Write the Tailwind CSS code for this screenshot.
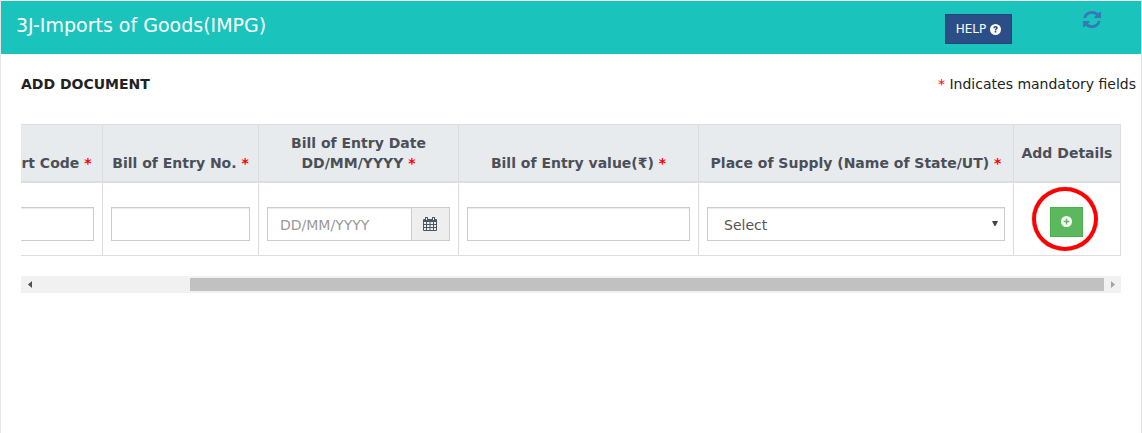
<!DOCTYPE html>
<html lang="en">
<head>
<meta charset="utf-8">
<meta name="viewport" content="width=device-width, initial-scale=1">
<title>3J-Imports of Goods(IMPG)</title>
<script src="https://cdn.jsdelivr.net/npm/@tailwindcss/browser@4"></script>
</head>
<body class="bg-white">
<main class="flex min-h-screen flex-col border-x border-[#e4e7ea] bg-white pt-px font-[Verdana,'DejaVu_Sans',sans-serif] text-sm leading-5 text-[#222]">
  <header class="flex h-[53px] items-start bg-[#1ac4bd] pr-10 pl-[15px] text-white">
    <h1 class="mt-3 flex-1 text-[19px] leading-6">3J-Imports of Goods(IMPG)</h1>
    <button type="button" class="mt-[13px] mr-[71px] flex h-[30px] w-[67px] items-center justify-center gap-1 border border-[#24447a] bg-[#2c4e86] text-xs">
      HELP
      <svg class="size-[11px]" viewBox="0 0 12 12" aria-hidden="true"><circle cx="6" cy="6" r="6" fill="#fff"/><path d="M3.600 4.500C3.800 3 4.800 2.300 6.100 2.300c1.300 0 2.400.8 2.400 2 0 1.600-1.700 1.600-1.700 2.700H5.100c0-1.900 1.600-1.900 1.600-2.700 0-.8-1.300-.8-1.500.4zM5.100 7.700h1.700v1.700H5.100z" fill="#2c4e86"/></svg>
    </button>
    <button type="button" aria-label="Refresh" class="mt-2.5 w-[18px]">
      <svg class="h-[17px] w-[18px]" viewBox="0 0 1536 1536" fill="#337ab7" preserveAspectRatio="none" aria-hidden="true"><path d="M1511 928q0 5-1 7-64 268-268 434.500T764 1536q-146 0-282.500-55T238 1324l-129 129q-19 19-45 19t-45-19-19-45V960q0-26 19-45t45-19h448q26 0 45 19t19 45-19 45l-137 137q71 66 161 102t187 36q134 0 250-65t186-179q11-17 53-117 8-23 30-23h192q13 0 22.500 9.500t9.500 22.500zM1536 128v448q0 26-19 45t-45 19h-448q-26 0-45-19t-19-45 19-45l138-138Q969 256 768 256q-134 0-250 65T332 500q-11 17-53 117-8 23-30 23H50q-13 0-22.500-9.500T18 608v-7q65-268 270-434.500T768 0q146 0 284 55.500T1297 212l130-129q19-19 45-19t45 19 19 45z"/></svg>
    </button>
  </header>

  <section class="flex items-center justify-between pt-5 pr-[5px] pl-5">
    <h2 class="font-bold">ADD DOCUMENT</h2>
    <p><span class="text-[#f00]">*</span> Indicates mandatory fields</p>
  </section>

  <section class="mx-5 mt-[30px]">
    <div class="flex justify-end overflow-hidden">
      <table class="w-[calc(100%+31px)] shrink-0 table-fixed border-collapse border border-[#ddd]">
        <colgroup>
          <col class="w-[112px]"><col class="w-[156px]"><col class="w-[200px]"><col><col class="w-[315px]"><col class="w-[107px]">
        </colgroup>
        <thead class="bg-[#e8ebee] text-[#4b4f58]">
          <tr class="h-[57px] border-b-2 border-[#ddd] align-bottom">
            <th scope="col" id="port" class="border-x border-[#ddd] pb-2 whitespace-nowrap">Port Code <span class="text-[#f00]">*</span></th>
            <th scope="col" id="entry" class="border-x border-[#ddd] pb-2 whitespace-nowrap">Bill of Entry No. <span class="text-[#f00]">*</span></th>
            <th scope="col" id="date" class="border-x border-[#ddd] pb-2">Bill of Entry Date<br>DD/MM/YYYY <span class="text-[#f00]">*</span></th>
            <th scope="col" id="value" class="border-x border-[#ddd] pb-2">Bill of Entry value(₹) <span class="text-[#f00]">*</span></th>
            <th scope="col" id="place" class="border-x border-[#ddd] pb-2 whitespace-nowrap">Place of Supply (Name of State/UT) <span class="text-[#f00]">*</span></th>
            <th scope="col" class="border-x border-[#ddd] align-middle whitespace-nowrap">Add Details</th>
          </tr>
        </thead>
        <tbody>
          <tr class="h-[74px] align-top text-[#555]">
            <td class="border border-[#ddd] px-2 pt-6"><input aria-labelledby="port" type="text" class="block h-[34px] w-full border border-[#ccc] px-3 shadow-[inset_0_1px_1px_rgba(0,0,0,0.075)]"></td>
            <td class="border border-[#ddd] px-2 pt-6"><input aria-labelledby="entry" type="text" class="block h-[34px] w-full border border-[#ccc] px-3 shadow-[inset_0_1px_1px_rgba(0,0,0,0.075)]"></td>
            <td class="border border-[#ddd] px-2 pt-6">
              <div class="flex h-[34px]">
                <input aria-labelledby="date" type="text" placeholder="DD/MM/YYYY" class="min-w-0 flex-1 border border-[#ccc] px-3 pt-0.5 shadow-[inset_0_1px_1px_rgba(0,0,0,0.075)] placeholder:text-[#999]">
                <button type="button" aria-label="Choose date" class="flex w-[38px] items-center justify-center border border-l-0 border-[#ccc] bg-[#eee] pr-0.5">
                  <svg class="h-3.5 w-3.5" viewBox="0 0 14 14" fill="#4d5761" aria-hidden="true"><path fill-rule="evenodd" d="M1 2h1V1a1 1 0 0 1 3 0v1h4V1a1 1 0 0 1 3 0v1h1a1 1 0 0 1 1 1v10a1 1 0 0 1-1 1H1a1 1 0 0 1-1-1V3a1 1 0 0 1 1-1zM3 1v2h1V1zM10 1v2h1V1zM1 5v2h2V5zM4 5v2h2.500V5zM7.500 5v2H10V5zM11 5v2h2V5zM1 8v2h2V8zM4 8v2h2.500V8zM7.500 8v2H10V8zM11 8v2h2V8zM1 11v2h2v-2zM4 11v2h2.500v-2zM7.500 11v2H10v-2zM11 11v2h2v-2z"/></svg>
                </button>
              </div>
            </td>
            <td class="border border-[#ddd] px-2 pt-6"><input aria-labelledby="value" type="text" class="block h-[34px] w-full border border-[#ccc] px-3 shadow-[inset_0_1px_1px_rgba(0,0,0,0.075)]"></td>
            <td class="border border-[#ddd] px-2 pt-6">
              <div class="relative">
                <select aria-labelledby="place" class="block h-[34px] w-full appearance-none border border-[#ccc] px-4 pt-0.5 shadow-[inset_0_1px_1px_rgba(0,0,0,0.075)]"><option>Select</option></select>
                <svg class="pointer-events-none absolute top-3.5 right-[7px] h-[5px] w-1.5" viewBox="0 0 6 5" fill="#444" aria-hidden="true"><path d="M0 0h6L3.500 5h-1z"/></svg>
              </div>
            </td>
            <td class="border border-[#ddd] pt-6 pr-[2px]">
              <div class="relative mx-auto w-[33px]">
                <button type="button" aria-label="Add details" class="flex h-[30px] w-full items-center justify-center border border-[#4cae4c] bg-[#5cb85c]">
                  <svg class="size-[11px]" viewBox="0 0 12 12" aria-hidden="true"><circle cx="6" cy="6" r="6" fill="#fff"/><path d="M5.200 2.800h1.600v2.400h2.400v1.600H6.800v2.400H5.200V6.800H2.800V5.200h2.400z" fill="#5cb85c"/></svg>
                </button>
                <span class="pointer-events-none absolute -top-5 -left-[18px] h-16 w-[66px] rounded-[50%] border-4 border-[#f00] shadow-[0_0_1px_#555]"></span>
              </div>
            </td>
          </tr>
        </tbody>
      </table>
    </div>

    <div class="mt-5 flex h-[17px] items-center bg-[#f1f1f1]" aria-hidden="true">
      <span class="flex w-[17px] justify-center"><svg class="h-[7px] w-1" viewBox="0 0 4 7" fill="#505050"><path d="M4 0v7L0 3.500z"/></svg></span>
      <span class="flex h-[13px] flex-1 justify-end"><span class="w-[85.7%] bg-[#c1c1c1]"></span></span>
      <span class="flex w-[17px] justify-center"><svg class="h-[7px] w-1" viewBox="0 0 4 7" fill="#a3a3a3"><path d="M0 0v7l4-3.500z"/></svg></span>
    </div>
  </section>
</main>
</body>
</html>
